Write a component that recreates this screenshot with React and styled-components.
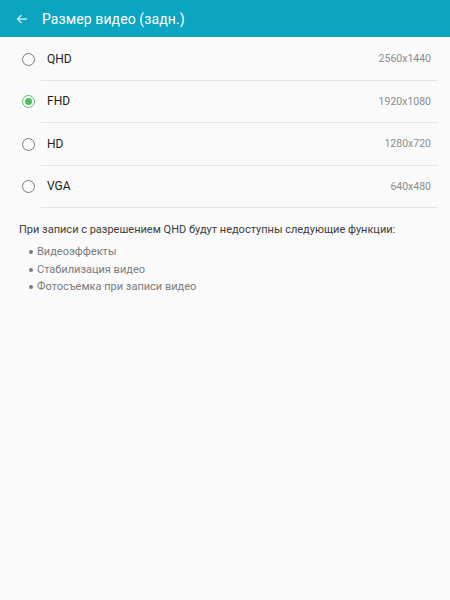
import React from 'react';
import styled, { createGlobalStyle } from 'styled-components';

const GlobalStyle = createGlobalStyle`
    html, body {
        margin: 0;
        padding: 0;
        background: #fafafa;
        font-family: Roboto, "Noto Sans", sans-serif;
    }
`;

const Page = styled.div`
    width: 450px;
    min-height: 600px;
    background: #fafafa;
`;

const Header = styled.header`
    height: 37px;
    background: #0ba5c1;
    display: flex;
    align-items: center;
    padding-left: 14px;
    gap: 12px;
    color: #ffffff;

    h1 {
        margin: 0;
        font-size: 14px;
        font-weight: 400;
        letter-spacing: 0.1px;
    }
`;

const BackButton = styled.button`
    background: none;
    border: none;
    padding: 0;
    width: 16px;
    height: 16px;
    display: flex;
    align-items: center;
    justify-content: center;
    color: #bfeaf2;
`;

const List = styled.div`
    display: flex;
    flex-direction: column;
    padding-top: 1px;
`;

const Row = styled.label`
    display: flex;
    align-items: center;
    height: 42.5px;
    padding-left: 22px;
`;

const Radio = styled.span`
    width: 11px;
    height: 11px;
    border-radius: 50%;
    border: 1px solid ${(props) => (props.checked ? '#5cc06c' : '#7a7a7a')};
    display: flex;
    align-items: center;
    justify-content: center;
    flex-shrink: 0;

    &::after {
        content: '';
        width: 7px;
        height: 7px;
        border-radius: 50%;
        background: #4fbd62;
        display: ${(props) => (props.checked ? 'block' : 'none')};
    }
`;

const RowBody = styled.div`
    flex: 1;
    height: 100%;
    margin-left: 6px;
    margin-right: 12px;
    padding-left: 6px;
    padding-right: 7px;
    display: flex;
    align-items: center;
    justify-content: space-between;
    border-bottom: 1px solid #e6e6e6;
    box-sizing: border-box;
`;

const Label = styled.span`
    font-size: 12px;
    color: #1e1e1e;
`;

const Value = styled.span`
    font-size: 10.5px;
    color: #8c8c8c;
`;

const Note = styled.div`
    padding: 15px 19px 0;

    p {
        margin: 0 0 7px;
        font-size: 11px;
        color: #3c3c3c;
    }
`;

const Bullets = styled.ul`
    list-style: none;
    margin: 0;
    padding: 0 0 0 10px;

    li {
        font-size: 11px;
        color: #7b7b7b;
        line-height: 17.5px;
        padding-left: 8px;
        position: relative;
    }

    li::before {
        content: '';
        position: absolute;
        left: 0;
        top: 7px;
        width: 4px;
        height: 4px;
        border-radius: 50%;
        background: #7b7b7b;
    }
`;

const options = [
    { id: 'qhd', label: 'QHD', value: '2560x1440' },
    { id: 'fhd', label: 'FHD', value: '1920x1080' },
    { id: 'hd', label: 'HD', value: '1280x720' },
    { id: 'vga', label: 'VGA', value: '640x480' },
];

const features = ['Видеоэффекты', 'Стабилизация видео', 'Фотосъемка при записи видео'];

const App = () => {
    const selected = 'fhd';

    return (
        <Page>
            <GlobalStyle />
            <Header>
                <BackButton>
                    <svg width="12" height="12" viewBox="0 0 12 12" fill="none">
                        <path
                            d="M11 6H1.5M5.5 2L1.5 6l4 4"
                            stroke="currentColor"
                            strokeWidth="1.4"
                        />
                    </svg>
                </BackButton>
                <h1>Размер видео (задн.)</h1>
            </Header>

            <List>
                {options.map((option) => (
                    <Row key={option.id}>
                        <Radio checked={option.id === selected} />
                        <RowBody>
                            <Label>{option.label}</Label>
                            <Value>{option.value}</Value>
                        </RowBody>
                    </Row>
                ))}
            </List>

            <Note>
                <p>При записи с разрешением QHD будут недоступны следующие функции:</p>
                <Bullets>
                    {features.map((feature) => (
                        <li key={feature}>{feature}</li>
                    ))}
                </Bullets>
            </Note>
        </Page>
    );
};

export default App;
